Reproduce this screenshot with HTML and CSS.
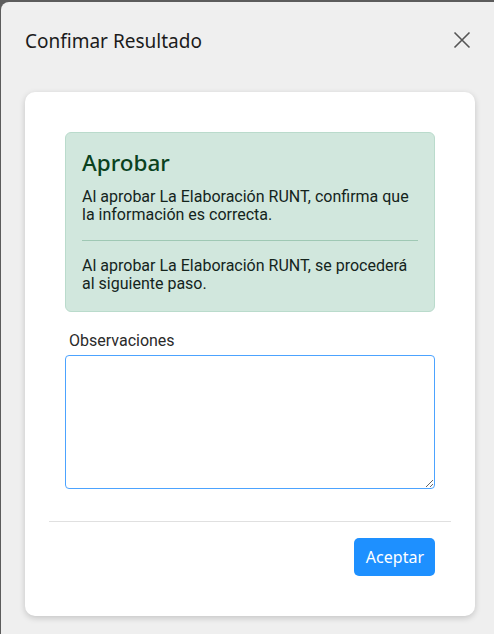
FILE: index.html
```html
<!DOCTYPE html>
<html lang="es">
<head>
<meta charset="utf-8">
<title>Confimar Resultado</title>
<link rel="stylesheet" href="styles.css">
</head>
<body>
<div class="dialog">
  <div class="dialog-header">
    <h1 class="dialog-title">Confimar Resultado</h1>
    <button class="close-btn" aria-label="Cerrar">
      <svg width="18" height="18" viewBox="0 0 18 18"><path d="M1.5 1.5 L16.5 16.5 M16.5 1.5 L1.5 16.5" stroke="#555" stroke-width="1.6" fill="none"/></svg>
    </button>
  </div>
  <div class="card">
    <div class="card-body">
      <div class="alert">
        <h2 class="alert-heading">Aprobar</h2>
        <p class="alert-text">Al aprobar La Elaboración RUNT, confirma que la información es correcta.</p>
        <hr class="alert-hr">
        <p class="alert-text">Al aprobar La Elaboración RUNT, se procederá al siguiente paso.</p>
      </div>
      <label class="field-label" for="obs">Observaciones</label>
      <textarea id="obs" class="field-textarea"></textarea>
    </div>
    <div class="card-footer">
      <button class="btn-primary">Aceptar</button>
    </div>
  </div>
</div>
</body>
</html>
```
FILE: styles.css
```css
html, body {
  margin: 0;
  height: 100%;
}
body {
  background: #5c5c5c;
  padding-top: 2px;
  padding-left: 1px;
  box-sizing: border-box;
}
.dialog {
  height: 100%;
  background: #efefef;
  border-top-left-radius: 8px;
  box-sizing: border-box;
  padding: 0 18px 18px 24px;
  display: flex;
  flex-direction: column;
}
.dialog-header {
  display: flex;
  align-items: center;
  justify-content: space-between;
  height: 90px;
}
.dialog-title {
  margin: 0;
  font-family: "Noto Sans", sans-serif;
  font-weight: 400;
  font-size: 19px;
  color: #1b1b1b;
  position: relative;
  top: -6px;
}
.close-btn {
  background: none;
  border: 0;
  padding: 0;
  width: 18px;
  height: 18px;
  position: relative;
  top: -7px;
  right: 5px;
  cursor: pointer;
}
.card {
  background: #fff;
  border-radius: 10px;
  box-shadow: 0 2px 6px rgba(0,0,0,0.18);
  width: 450px;
  flex: 1;
  display: flex;
  flex-direction: column;
}
.card-body {
  padding: 40px 40px 32px 40px;
  display: flex;
  flex-direction: column;
}
.alert {
  background: #d1e7dd;
  border: 1px solid #badbcc;
  border-radius: 6px;
  padding: 15px 16px 18px 16px;
  font-family: Roboto, sans-serif;
}
.alert-heading {
  margin: 0 0 10px 0;
  font-family: "Noto Sans", sans-serif;
  font-weight: 500;
  font-size: 22.5px;
  line-height: 30px;
  color: #0a421e;
}
.alert-text {
  margin: 0;
  font-size: 16px;
  line-height: 18px;
  color: #14241c;
}
.alert-hr {
  border: 0;
  border-top: 1px solid #9fc8b4;
  margin: 16px 0 16px 0;
}
.field-label {
  font-family: Roboto, sans-serif;
  font-size: 16px;
  line-height: 18px;
  color: #2a2a2a;
  margin: 20px 0 5px 4px;
}
.field-textarea {
  height: 134px;
  box-sizing: border-box;
  border: 1px solid #4ca3ff;
  border-radius: 4px;
  outline: none;
  resize: vertical;
  font-family: Roboto, sans-serif;
  font-size: 15px;
}
.card-footer {
  margin: 0 24px;
  border-top: 1px solid #e0e0e0;
  padding-top: 16px;
  display: flex;
  justify-content: flex-end;
  padding-right: 16px;
}
.btn-primary {
  background: #1e90ff;
  color: #fff;
  border: 0;
  border-radius: 5px;
  height: 38px;
  padding: 0 11px 0 12px;
  font-family: "Noto Sans", sans-serif;
  font-size: 16px;
  cursor: pointer;
}
```
